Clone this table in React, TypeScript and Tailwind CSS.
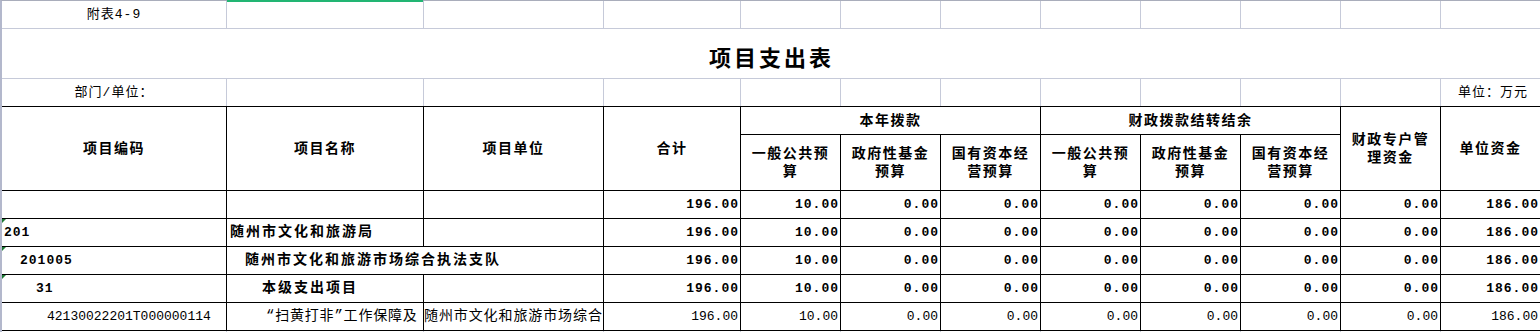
const font = "font-['Liberation_Mono','Noto_Sans_CJK_SC',monospace]";
const grid = "border-[#c6cad9]";

const colW = [
  "w-[225px]",
  "w-[197px]",
  "w-[180px]",
  "w-[137px]",
  "w-[100px]",
  "w-[100px]",
  "w-[100px]",
  "w-[100px]",
  "w-[100px]",
  "w-[100px]",
  "w-[100px]",
  "w-[100px]",
];

type Row = {
  code: string;
  codePad: string;
  name: string;
  namePad: string;
  nameTrack?: string;
  unit?: string;
  spanName?: boolean;
  mark?: boolean;
  bold: boolean;
  nums: string[];
};

const rows: Row[] = [
  {
    code: "",
    codePad: "pl-[2px]",
    name: "",
    namePad: "pl-[3px]",
    bold: true,
    nums: ["196.00", "10.00", "0.00", "0.00", "0.00", "0.00", "0.00", "0.00", "186.00"],
  },
  {
    code: "201",
    codePad: "pl-[2px]",
    name: "随州市文化和旅游局",
    namePad: "pl-[3px]",
    mark: true,
    bold: true,
    nums: ["196.00", "10.00", "0.00", "0.00", "0.00", "0.00", "0.00", "0.00", "186.00"],
  },
  {
    code: "201005",
    codePad: "pl-[18px]",
    name: "随州市文化和旅游市场综合执法支队",
    namePad: "pl-[18px]",
    spanName: true,
    mark: true,
    bold: true,
    nums: ["196.00", "10.00", "0.00", "0.00", "0.00", "0.00", "0.00", "0.00", "186.00"],
  },
  {
    code: "31",
    codePad: "pl-[34px]",
    name: "本级支出项目",
    namePad: "pl-[35px]",
    mark: true,
    bold: true,
    nums: ["196.00", "10.00", "0.00", "0.00", "0.00", "0.00", "0.00", "0.00", "186.00"],
  },
  {
    code: "42130022201T000000114",
    codePad: "pl-[45px]",
    name: "“扫黄打非”工作保障及",
    namePad: "pl-[39px]",
    nameTrack: "tracking-[0.8px]",
    unit: "随州市文化和旅游市场综合",
    bold: false,
    nums: ["196.00", "10.00", "0.00", "0.00", "0.00", "0.00", "0.00", "0.00", "186.00"],
  },
];

function Head({ children, className = "" }: { children: React.ReactNode; className?: string }) {
  return (
    <div
      className={`flex items-center justify-center border-r border-b border-black text-center text-[14px] leading-[18px] font-bold tracking-[1.5px] ${className}`}
    >
      {children}
    </div>
  );
}

export default function App() {
  return (
    <div className={`w-[1540px] h-[332px] overflow-hidden bg-white text-black ${font}`}>
      <div className="relative w-[1541px] border-t border-l-2 border-t-[#a9adbb] border-l-[#b3b8cc]">
        {/* 附表 row */}
        <div className="flex h-[28px]">
          {colW.map((w, i) => (
            <div key={i} className={`relative ${w} shrink-0 border-r border-b ${grid}`}>
              {i === 1 && <div className="absolute -top-px left-0 right-0 h-[2px] bg-[#22b573]" />}
              {i === 0 && (
                <div className="flex h-full items-center justify-center text-[13px] tracking-[1px]">
                  附表4-9
                </div>
              )}
            </div>
          ))}
        </div>

        {/* title */}
        <div className={`flex h-[50px] items-center justify-center border-b pt-[5px] ${grid}`}>
          <span className="text-[22px] font-bold tracking-[3px] leading-none font-['Noto_Sans_CJK_SC',sans-serif]">
            项目支出表
          </span>
        </div>

        {/* 部门/单位 row */}
        <div className="flex h-[27px]">
          {colW.map((w, i) => (
            <div
              key={i}
              className={`${w} shrink-0 border-r ${grid} flex items-center text-[13px] tracking-[1px] ${
                i === 0 ? "justify-center" : "justify-end pr-[12px]"
              }`}
            >
              {i === 0 ? "部门/单位：" : i === 11 ? "单位：万元" : ""}
            </div>
          ))}
        </div>

        {/* table */}
        <div className="grid grid-cols-[225px_197px_180px_137px_repeat(8,100px)] grid-rows-[28px_56px_repeat(5,28px)] border-t border-black">
          <Head className="row-span-2">项目编码</Head>
          <Head className="row-span-2">项目名称</Head>
          <Head className="row-span-2">项目单位</Head>
          <Head className="row-span-2">合计</Head>
          <Head className="col-span-3">本年拨款</Head>
          <Head className="col-span-3">财政拨款结转结余</Head>
          <Head className="row-span-2">
            财政专户管
            <br />
            理资金
          </Head>
          <Head className="row-span-2">单位资金</Head>
          <Head>
            一般公共预
            <br />
            算
          </Head>
          <Head>
            政府性基金
            <br />
            预算
          </Head>
          <Head>
            国有资本经
            <br />
            营预算
          </Head>
          <Head>
            一般公共预
            <br />
            算
          </Head>
          <Head>
            政府性基金
            <br />
            预算
          </Head>
          <Head>
            国有资本经
            <br />
            营预算
          </Head>

          {rows.map((r, ri) => {
            const weight = r.bold ? "font-bold" : "font-normal";
            const numTrack = r.bold ? "tracking-[1px] pr-[1px]" : "pr-[2px]";
            const cjkTrack = r.nameTrack ?? (r.bold ? "tracking-[2px]" : "tracking-[1px]");
            return [
              <div
                key={`c${ri}`}
                className={`relative flex items-center overflow-hidden whitespace-nowrap border-r border-b border-black text-[13px] ${weight} ${numTrack} ${r.codePad}`}
              >
                {r.mark && (
                  <span className="absolute left-0 top-0 h-0 w-0 border-t-[4px] border-r-[4px] border-t-[#1e7b34] border-r-transparent" />
                )}
                {r.code}
              </div>,
              <div
                key={`n${ri}`}
                className={`flex items-center overflow-hidden whitespace-nowrap border-r border-b border-black text-[14px] ${weight} ${cjkTrack} ${r.namePad} ${
                  r.spanName ? "col-span-2" : ""
                }`}
              >
                {r.name}
              </div>,
              !r.spanName && (
                <div
                  key={`u${ri}`}
                  className={`flex items-center overflow-hidden whitespace-nowrap border-r border-b border-black text-[14px] ${weight} tracking-[0.9px]`}
                >
                  {r.unit ?? ""}
                </div>
              ),
              ...r.nums.map((n, ni) => (
                <div
                  key={`v${ri}-${ni}`}
                  className={`flex items-center justify-end border-r border-b border-black text-[13px] ${weight} ${numTrack}`}
                >
                  {n}
                </div>
              )),
            ];
          })}
        </div>

        {/* gridlines below */}
        <div className="flex h-[10px]">
          {colW.map((w, i) => (
            <div key={i} className={`${w} shrink-0 border-r ${grid}`} />
          ))}
        </div>
      </div>
    </div>
  );
}
